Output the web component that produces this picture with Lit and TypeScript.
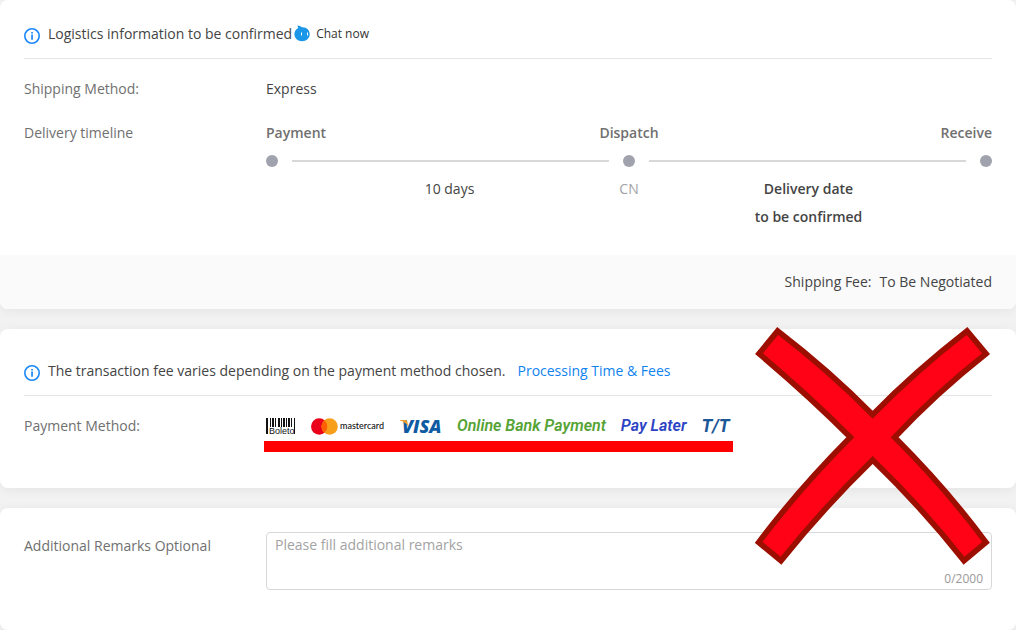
import { LitElement, html, css, svg } from "lit";
import { customElement, state } from "lit/decorators.js";

const infoIcon = html`
  <svg class="info-icon" viewBox="0 0 16 16" width="16" height="16" aria-hidden="true">
    <circle cx="8" cy="8" r="7.2" fill="none" stroke="#1a88fa" stroke-width="1.6" />
    <path d="M7.2 4h1.7v1.5H7.2zM7.2 6.5h1.7v5.3H7.2z" fill="#1a88fa" />
  </svg>
`;

const BARS = [
  [0, 2], [4, 1], [6, 2], [9, 1], [12, 2], [15, 1], [17, 2], [20, 1], [22, 2], [25, 1], [28, 1],
];

@customElement("app-root")
export class AppRoot extends LitElement {
  @state() private remarks = "";

  static styles = css`
    :host {
      display: block;
      min-height: 100vh;
      background: #f2f2f2;
      color: #444;
      font: 14px/20px "Open Sans", sans-serif;
    }
    .page {
      display: flex;
      flex-direction: column;
      gap: 20px;
    }
    .card {
      position: relative;
      border-radius: 8px;
      background: #fff;
      box-shadow: 0 2px 12px rgba(0, 0, 0, 0.06);
    }
    .body {
      padding: 24px;
    }
    .payment .body {
      padding-top: 32px;
      padding-bottom: 52px;
    }
    .remarks .body {
      padding-bottom: 40px;
    }
    .notice {
      display: flex;
      align-items: center;
      gap: 8px;
      padding-bottom: 14px;
      border-bottom: 1px solid #e5e5e5;
    }
    .info-icon {
      margin-top: 4px;
    }
    .notice-text {
      display: flex;
    }
    .chat {
      display: flex;
      align-items: center;
      gap: 6px;
      margin-left: 2px;
      padding: 0;
      border: 0;
      background: none;
      color: #333;
      font: 12px/20px "Open Sans", sans-serif;
    }
    .link {
      margin-left: 12px;
      color: #0f83ef;
      text-decoration: none;
    }
    .row {
      display: grid;
      grid-template-columns: 218px minmax(0, 1fr);
      column-gap: 24px;
      margin-top: 20px;
    }
    .row + .row {
      margin-top: 24px;
    }
    .remarks .row {
      margin-top: 0;
    }
    .label {
      color: #707070;
    }
    .remarks .label {
      padding-top: 4px;
    }
    .steps {
      display: grid;
      grid-template-columns: 1fr auto 1fr;
      color: #707070;
      font-weight: 600;
    }
    .end {
      text-align: right;
    }
    .track {
      display: flex;
      align-items: center;
      gap: 14px;
      padding: 12px 0 8px;
    }
    .dot {
      width: 12px;
      height: 12px;
      border-radius: 50%;
      background: #a0a2ad;
    }
    .line {
      flex: 1;
      height: 2px;
      background: #d8d8d8;
    }
    .legs {
      display: grid;
      grid-template-columns: 1fr 20px 1fr;
      line-height: 28px;
      text-align: center;
    }
    .outbound {
      padding-left: 14px;
    }
    .inbound {
      padding-right: 14px;
      font-weight: 600;
    }
    .country {
      color: #a3a3a3;
    }
    .fee {
      display: flex;
      justify-content: flex-end;
      gap: 8px;
      padding: 17px 24px;
      border-radius: 0 0 8px 8px;
      background: #fafafa;
    }
    .methods {
      position: relative;
      display: flex;
      align-items: center;
      gap: 15px;
      width: max-content;
      height: 20px;
    }
    .mastercard {
      display: flex;
      align-items: center;
      gap: 2px;
      color: #111;
      font: 500 9px/20px Lato, sans-serif;
    }
    .brand {
      font: italic 600 16px/20px Roboto, sans-serif;
    }
    .online {
      color: #56a336;
    }
    .later {
      color: #2c44c4;
    }
    .tt {
      color: #1c5796;
      font-size: 18px;
      font-weight: 700;
    }
    .underline {
      position: absolute;
      top: 25px;
      left: -2px;
      right: -3px;
      height: 11px;
      background: #f00;
    }
    .cross {
      position: absolute;
      z-index: 1;
      top: -2px;
      right: 26px;
      pointer-events: none;
    }
    .field {
      display: flex;
      flex-direction: column;
      border: 1px solid #d8d8d8;
      border-radius: 4px;
    }
    .input {
      box-sizing: border-box;
      width: 100%;
      height: 36px;
      padding: 2px 8px;
      border: 0;
      outline: 0;
      background: none;
      color: #444;
      font: inherit;
      resize: none;
    }
    .input::placeholder {
      color: #a3a3a3;
    }
    .count {
      padding: 0 8px;
      color: #999;
      font-size: 12px;
      text-align: right;
    }
  `;

  private onInput(e: Event) {
    this.remarks = (e.target as HTMLTextAreaElement).value;
  }

  render() {
    return html`
      <main class="page">
        <section class="card">
          <div class="body">
            <div class="notice">
              ${infoIcon}
              <div class="notice-text">
                <span>Logistics information to be confirmed</span>
                <button class="chat" type="button">
                  <svg viewBox="0 0 16 18" width="16" height="18" aria-hidden="true">
                    <path d="M3.2 .6C5 .7 6.500 1.300 8 2.200 12.500 1.800 15.700 5 15.700 9c0 4.200-3.200 7.200-7.600 7.200S.4 13.200.4 9c0-2.400 1.300-4.600 3.600-5.800C4.100 2.300 3.800 1.500 3.200.6z" fill="#1b97e9" />
                    <path d="M7.500 7.500v3M13.500 7.500v3" stroke="#fff" stroke-width="1" />
                  </svg>
                  <span>Chat now</span>
                </button>
              </div>
            </div>
            <div class="row">
              <div class="label">Shipping Method:</div>
              <div>Express</div>
            </div>
            <div class="row">
              <div class="label">Delivery timeline</div>
              <div>
                <div class="steps"><span>Payment</span><span>Dispatch</span><span class="end">Receive</span></div>
                <div class="track">
                  <span class="dot"></span><span class="line"></span><span class="dot"></span
                  ><span class="line"></span><span class="dot"></span>
                </div>
                <div class="legs">
                  <div class="outbound">10 days</div>
                  <div class="country">CN</div>
                  <div class="inbound">Delivery date<br />to be confirmed</div>
                </div>
              </div>
            </div>
          </div>
          <div class="fee"><span>Shipping Fee:</span><span>To Be Negotiated</span></div>
        </section>

        <section class="card payment">
          <div class="body">
            <div class="notice">
              ${infoIcon}
              <div class="notice-text">
                <span>The transaction fee varies depending on the payment method chosen.</span>
                <a class="link" href="#fees">Processing Time &amp; Fees</a>
              </div>
            </div>
            <div class="row">
              <div class="label">Payment Method:</div>
              <div class="methods">
                <svg viewBox="0 0 30 20" width="30" height="20" role="img" aria-label="Boleto">
                  ${BARS.map(([x, w]) => svg`<rect x=${x} y="2" width=${w} height=${x === 0 || x === 28 ? 16 : 9} fill="#111" />`)}
                  <text x="3" y="18" font-family="Liberation Sans, sans-serif" font-size="9" fill="#111">Boleto</text>
                </svg>
                <span class="mastercard">
                  <svg viewBox="0 0 27 17" width="27" height="17" aria-hidden="true">
                    <circle cx="8.200" cy="8.500" r="8.200" fill="#eb001b" />
                    <circle cx="18.600" cy="8.500" r="8.200" fill="#f79e1b" />
                    <path d="M13.400 2.200a8.200 8.200 0 0 1 0 12.600a8.200 8.200 0 0 1 0-12.600z" fill="#ff5f00" />
                  </svg>
                  <span>mastercard</span>
                </span>
                <svg viewBox="0 0 43 20" width="43" height="20" overflow="visible" role="img" aria-label="VISA">
                  <text x="3" y="17" font-family="Open Sans, sans-serif" font-size="18" font-weight="800" font-style="italic" fill="#0e5ba3">VISA</text>
                  <path d="M1 4h5.500q1.400 0 1.700 1.400L9.500 11Q7 6 1 4.500z" fill="#f0a02c" />
                </svg>
                <span class="brand online">Online Bank Payment</span>
                <span class="brand later">Pay Later</span>
                <span class="brand tt">T/T</span>
                <span class="underline"></span>
              </div>
            </div>
          </div>
          <svg class="cross" viewBox="44 50 705 714" width="235" height="238" aria-hidden="true">
            <path
              d="M112 62Q270 184 397 313Q523 184 680 62L737 130Q585 250 463 381Q620 538 737 696L671 751Q545 592 397 449Q250 592 122 751L55 696Q174 538 330 381Q208 258 56 130Z"
              fill="#ff0216" stroke="#9c0e00" stroke-width="17" stroke-linejoin="miter" />
          </svg>
        </section>

        <section class="card remarks">
          <div class="body">
            <div class="row">
              <label class="label" for="remarks">Additional Remarks Optional</label>
              <div class="field">
                <textarea id="remarks" class="input" maxlength="2000" placeholder="Please fill additional remarks" @input=${this.onInput}></textarea>
                <div class="count">${this.remarks.length}/2000</div>
              </div>
            </div>
          </div>
        </section>
      </main>
    `;
  }
}
